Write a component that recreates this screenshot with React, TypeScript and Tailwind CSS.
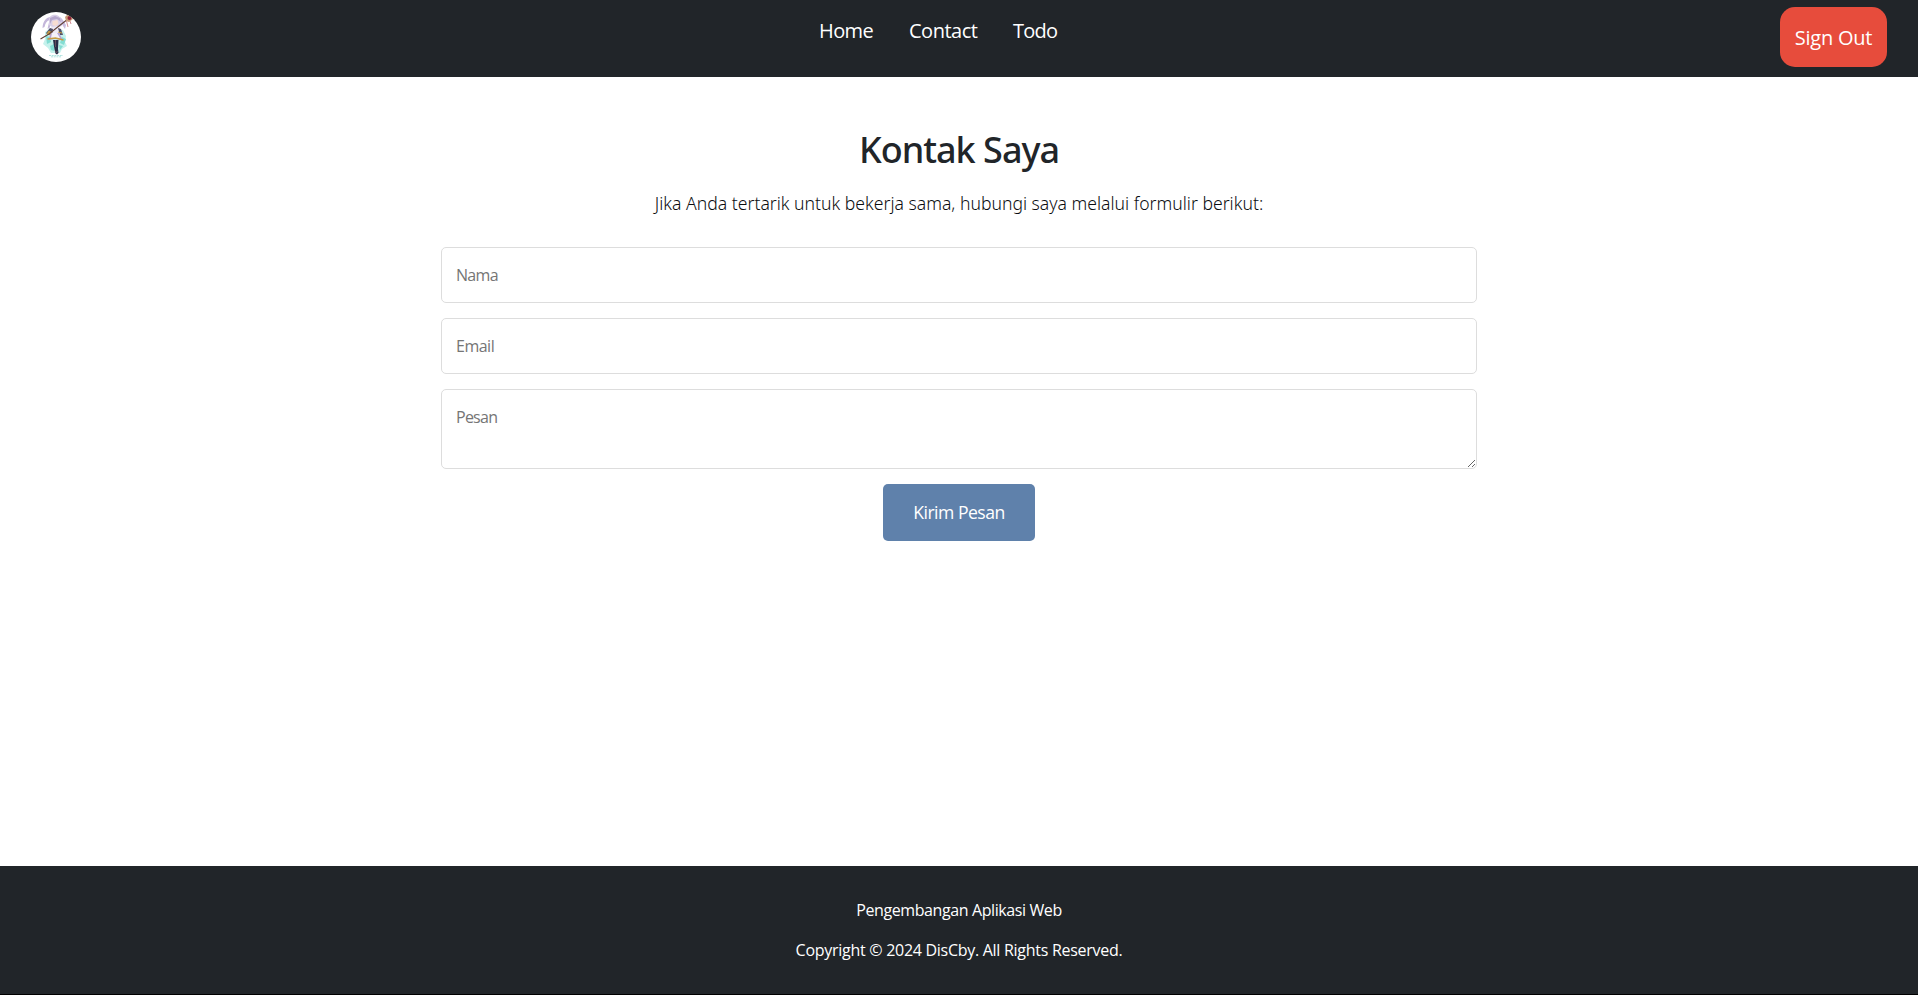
function Logo() {
  return (
    <svg viewBox="0 0 50 50" className="size-[50px] rounded-full bg-white" role="img" aria-hidden="true">
      <path d="M14 20l5-4 13 2 3 6-1 6 2 4-5 3-2 4-9 0-3-5-5-4 2-5z" fill="#c5f1ec" />
      <path d="M15 24l4 1 1 5-4 2zM31 25l4 2-2 6-4-2zM19 34l4-2 0 7-3-1zM28 33l4 1-3 4z" fill="#83ddd3" />
      <path d="M20 5c-5 0-8 4-8.500 11l2-1c1-4 2-6 5-7l-2 9 2-1 3-9z" fill="#c4b7da" />
      <path d="M29 5c3 2 4 5 6 8l-1 4-2-3-3-6z" fill="#c9bce0" />
      <path d="M18 8c0-7 11-7 12 0l1 6-3 1-7 0-3-2z" fill="#d9cfe7" />
      <path d="M19 6l5-2 5 2 1 4-4-3-5 1-2 4z" fill="#b5a7cc" />
      <path d="M21.500 9l5-1 1 4-3 2-3-1z" fill="#f7ddd2" />
      <path d="M20 15l8-1 2 6-3 6-7 0-1-6z" fill="#eee9f5" />
      <path d="M19 16l3 1-1 6-4 0-2-2zM27 16l3 1 2 6-3 0z" fill="#51506a" />
      <path d="M18 19l3 2-1 2-4-1zM27 20l4 1" stroke="#c79c43" strokeWidth="1" fill="#c79c43" />
      <path d="M20 21h8l4 7-8-1-7 1z" fill="#b9a4d5" />
      <path d="M21 21h5l3 5-4 1-5-1z" fill="#f5f1f9" />
      <path d="M16.500 27l8-1 8 2" stroke="#c79c43" fill="none" strokeWidth="1.3" />
      <path d="M22 28h5.500l-.5 9 .5 4-1.500 1.500-1.500-1-1-4z" fill="#292e49" />
      <path d="M24.500 28v7M24.500 39l1 2 1-2" stroke="#725561" strokeWidth=".8" fill="none" />
      <path d="M9.500 27L18 22 28 14 37 7" stroke="#624238" strokeWidth="1.1" fill="none" />
      <path d="M35 9l-1-4 3-3 4 1 1 4-4 3z" fill="#c79b78" />
      <circle cx="38.500" cy="6" r="2" fill="#8f1f35" />
      <path d="M35.500 9l1.500 6M39 9l1 3" stroke="#c8717c" strokeWidth=".8" />
      <path d="M18 43.500h14M20 44.800h10" stroke="#9ddcd8" strokeWidth=".8" strokeDasharray="2 .7" />
    </svg>
  );
}

const field =
  "block w-full rounded-[5px] border border-[#dddddd] bg-white px-3.5 text-base leading-6 text-[#212529] outline-none placeholder:text-[#757575] placeholder:opacity-100";

export default function App() {
  return (
    <div className="flex h-[995px] flex-col border-b border-black bg-white font-['Open_Sans','Noto_Sans',sans-serif] text-[#212529]">
      <header className="grid h-[77px] shrink-0 grid-cols-[1fr_auto_1fr] items-start bg-[#212529] text-xl text-white">
        <a href="#" className="ml-[31px] mt-3 w-fit">
          <Logo />
        </a>
        <nav className="mr-[42px] mt-4 flex gap-[35px] leading-[30px]">
          <a href="#" className="w-[55px] whitespace-nowrap tracking-[-0.6px]">Home</a>
          <a href="#" className="w-[69px] whitespace-nowrap tracking-[-0.5px]">Contact</a>
          <a href="#" className="w-[44px] whitespace-nowrap tracking-[-0.8px]">Todo</a>
        </nav>
        <button className="mr-[31px] mt-[7px] h-[60px] w-[107px] justify-self-end whitespace-nowrap rounded-[15px] bg-[#e74c3c] pt-0.5 leading-[30px] tracking-[-0.25px]">
          Sign Out
        </button>
      </header>

      <main className="flex flex-1 flex-col items-center pt-[49px]">
        <h1 className="font-['Noto_Sans',sans-serif] text-[36px] font-medium leading-12 tracking-[-1px]">Kontak Saya</h1>
        <p className="mt-[15px] font-['Noto_Sans',sans-serif] text-[17.6px] font-light leading-[28px] text-[#0b0d10]">
          Jika Anda tertarik untuk bekerja sama, hubungi saya melalui formulir berikut:
        </p>
        <form className="mt-[30px] flex w-[1036px] flex-col items-center gap-[15px]" onSubmit={(e) => e.preventDefault()}>
          <input type="text" placeholder="Nama" className={`${field} h-14 tracking-[-0.7px]`} />
          <input type="email" placeholder="Email" className={`${field} h-14 tracking-[-0.5px]`} />
          <textarea placeholder="Pesan" className={`${field} h-20 resize-y py-[15px] tracking-[-0.75px]`} />
          <button className="h-[57px] w-[152px] whitespace-nowrap rounded-[5px] bg-[#5f81ab] text-[17.6px] text-white tracking-[-0.5px]">
            Kirim Pesan
          </button>
        </form>
      </main>

      <footer className="flex h-32 shrink-0 flex-col items-center gap-4 bg-[#212529] pt-8 text-base leading-6 text-white">
        <p className="tracking-[-0.4px]">Pengembangan Aplikasi Web</p>
        <p className="tracking-[-0.28px]">Copyright © 2024 DisCby. All Rights Reserved.</p>
      </footer>
    </div>
  );
}
